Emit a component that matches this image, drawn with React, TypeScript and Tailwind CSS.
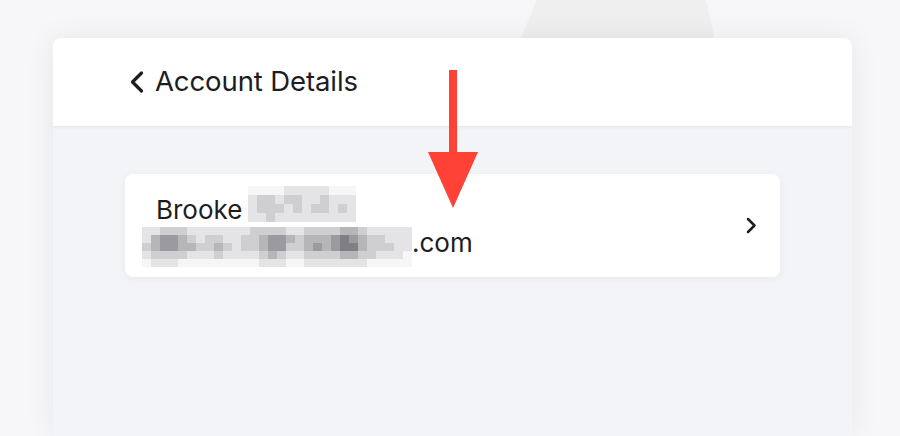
const nameBlur = [
  [0, 0, 0, 0, 1, 1, 1, 1, 1, 0, 0, 0],
  [1, 2, 2, 1, 2, 2, 1, 1, 2, 1, 1, 1],
  [1, 2, 2, 2, 1, 2, 1, 2, 2, 1, 2, 1],
  [1, 1, 2, 1, 1, 1, 1, 1, 1, 1, 1, 1],
]

const emailBlur = [
  [1, 1, 2, 2, 2, 1, 1, 1, 1, 1, 1, 1, 2, 2, 2, 2, 1, 1, 2, 2, 2, 2, 3, 3, 2, 1, 1, 1, 1, 1],
  [1, 3, 4, 4, 3, 2, 1, 2, 2, 1, 1, 2, 2, 3, 4, 4, 3, 2, 3, 3, 3, 4, 5, 4, 3, 2, 2, 1, 1, 1],
  [2, 3, 4, 4, 3, 3, 2, 2, 3, 2, 1, 2, 2, 3, 4, 4, 2, 2, 3, 4, 3, 4, 5, 5, 3, 2, 2, 2, 1, 1],
  [1, 2, 2, 2, 2, 1, 1, 1, 2, 1, 1, 1, 1, 2, 3, 2, 1, 1, 2, 2, 2, 2, 3, 3, 2, 2, 1, 1, 1, 0],
  [0, 1, 1, 1, 0, 0, 0, 0, 0, 0, 0, 0, 0, 1, 1, 1, 0, 0, 1, 1, 1, 1, 1, 1, 1, 0, 0, 0, 0, 0],
]

const shades = ['#f6f6f7', '#e4e4e6', '#cfcfd2', '#b6b6b9', '#9b9b9f', '#808084']

function Mosaic({ rows, cell }: { rows: number[][]; cell: string }) {
  return (
    <div className="flex flex-col">
      {rows.map((row, r) => (
        <div key={r} className="flex">
          {row.map((v, c) => (
            <div key={c} className={cell} style={{ backgroundColor: shades[v] }} />
          ))}
        </div>
      ))}
    </div>
  )
}

export default function App() {
  return (
    <div className="relative h-[436px] w-[900px] overflow-hidden bg-[#f7f7f9] font-['Inter',sans-serif] text-[#1d1d1f]">
      {/* faint shape behind the panel */}
      <svg className="absolute left-0 top-0" width="900" height="60">
        <polygon points="537,0 706,0 715,40 520,40" fill="#efeff0" />
      </svg>

      <div className="relative pl-[53px] pt-[38px]">
        <div className="h-[398px] w-[799px] overflow-hidden rounded-t-lg bg-[#f3f4f8] shadow-[0_0_30px_rgba(0,0,0,0.07)]">
          {/* Header */}
          <div className="relative z-10 flex h-[88px] items-center gap-[10px] bg-white pl-[76px] shadow-[0_1px_3px_rgba(0,0,0,0.08)]">
            <svg width="16" height="24" viewBox="0 0 16 24" fill="none" stroke="#1d1d1f" strokeWidth="3.2" strokeLinecap="round" strokeLinejoin="round">
              <path d="M12.5 3 L3.5 12 L12.5 21" />
            </svg>
            <span className="text-[27.5px] leading-none tracking-[-0.1px]">Account Details</span>
          </div>

          {/* Body */}
          <div className="px-[72px] pt-[48px]">
            <div className="flex h-[103px] items-center justify-between rounded-lg bg-white pl-[31px] pr-[23px] shadow-[0_2px_8px_rgba(0,0,0,0.05)]">
              <div className="flex flex-col text-[26px]">
                <div className="flex h-[33px] items-center">
                  <span className="leading-[33px]">Brooke</span>
                  <div className="relative -top-[5px] ml-[6px]">
                    <Mosaic rows={nameBlur} cell="h-[9px] w-[9px]" />
                  </div>
                </div>
                <div className="-ml-[14px] flex h-[33px] items-center">
                  <div className="relative top-[5px]">
                    <Mosaic rows={emailBlur} cell="h-[8px] w-[9px]" />
                  </div>
                  <span className="leading-[33px]">.com</span>
                </div>
              </div>
              <svg width="11" height="17" viewBox="0 0 11 17" fill="none" stroke="#1d1d1f" strokeWidth="2.5" strokeLinecap="round" strokeLinejoin="round">
                <path d="M2 2 L8.5 8.5 L2 15" />
              </svg>
            </div>
          </div>
        </div>
      </div>

      {/* red annotation arrow */}
      <svg className="absolute left-0 top-0 z-20" width="900" height="436">
        <rect x="449" y="70" width="8" height="84" fill="#ff4136" />
        <polygon points="428,152 478,152 453,208" fill="#ff4136" />
      </svg>
    </div>
  )
}
